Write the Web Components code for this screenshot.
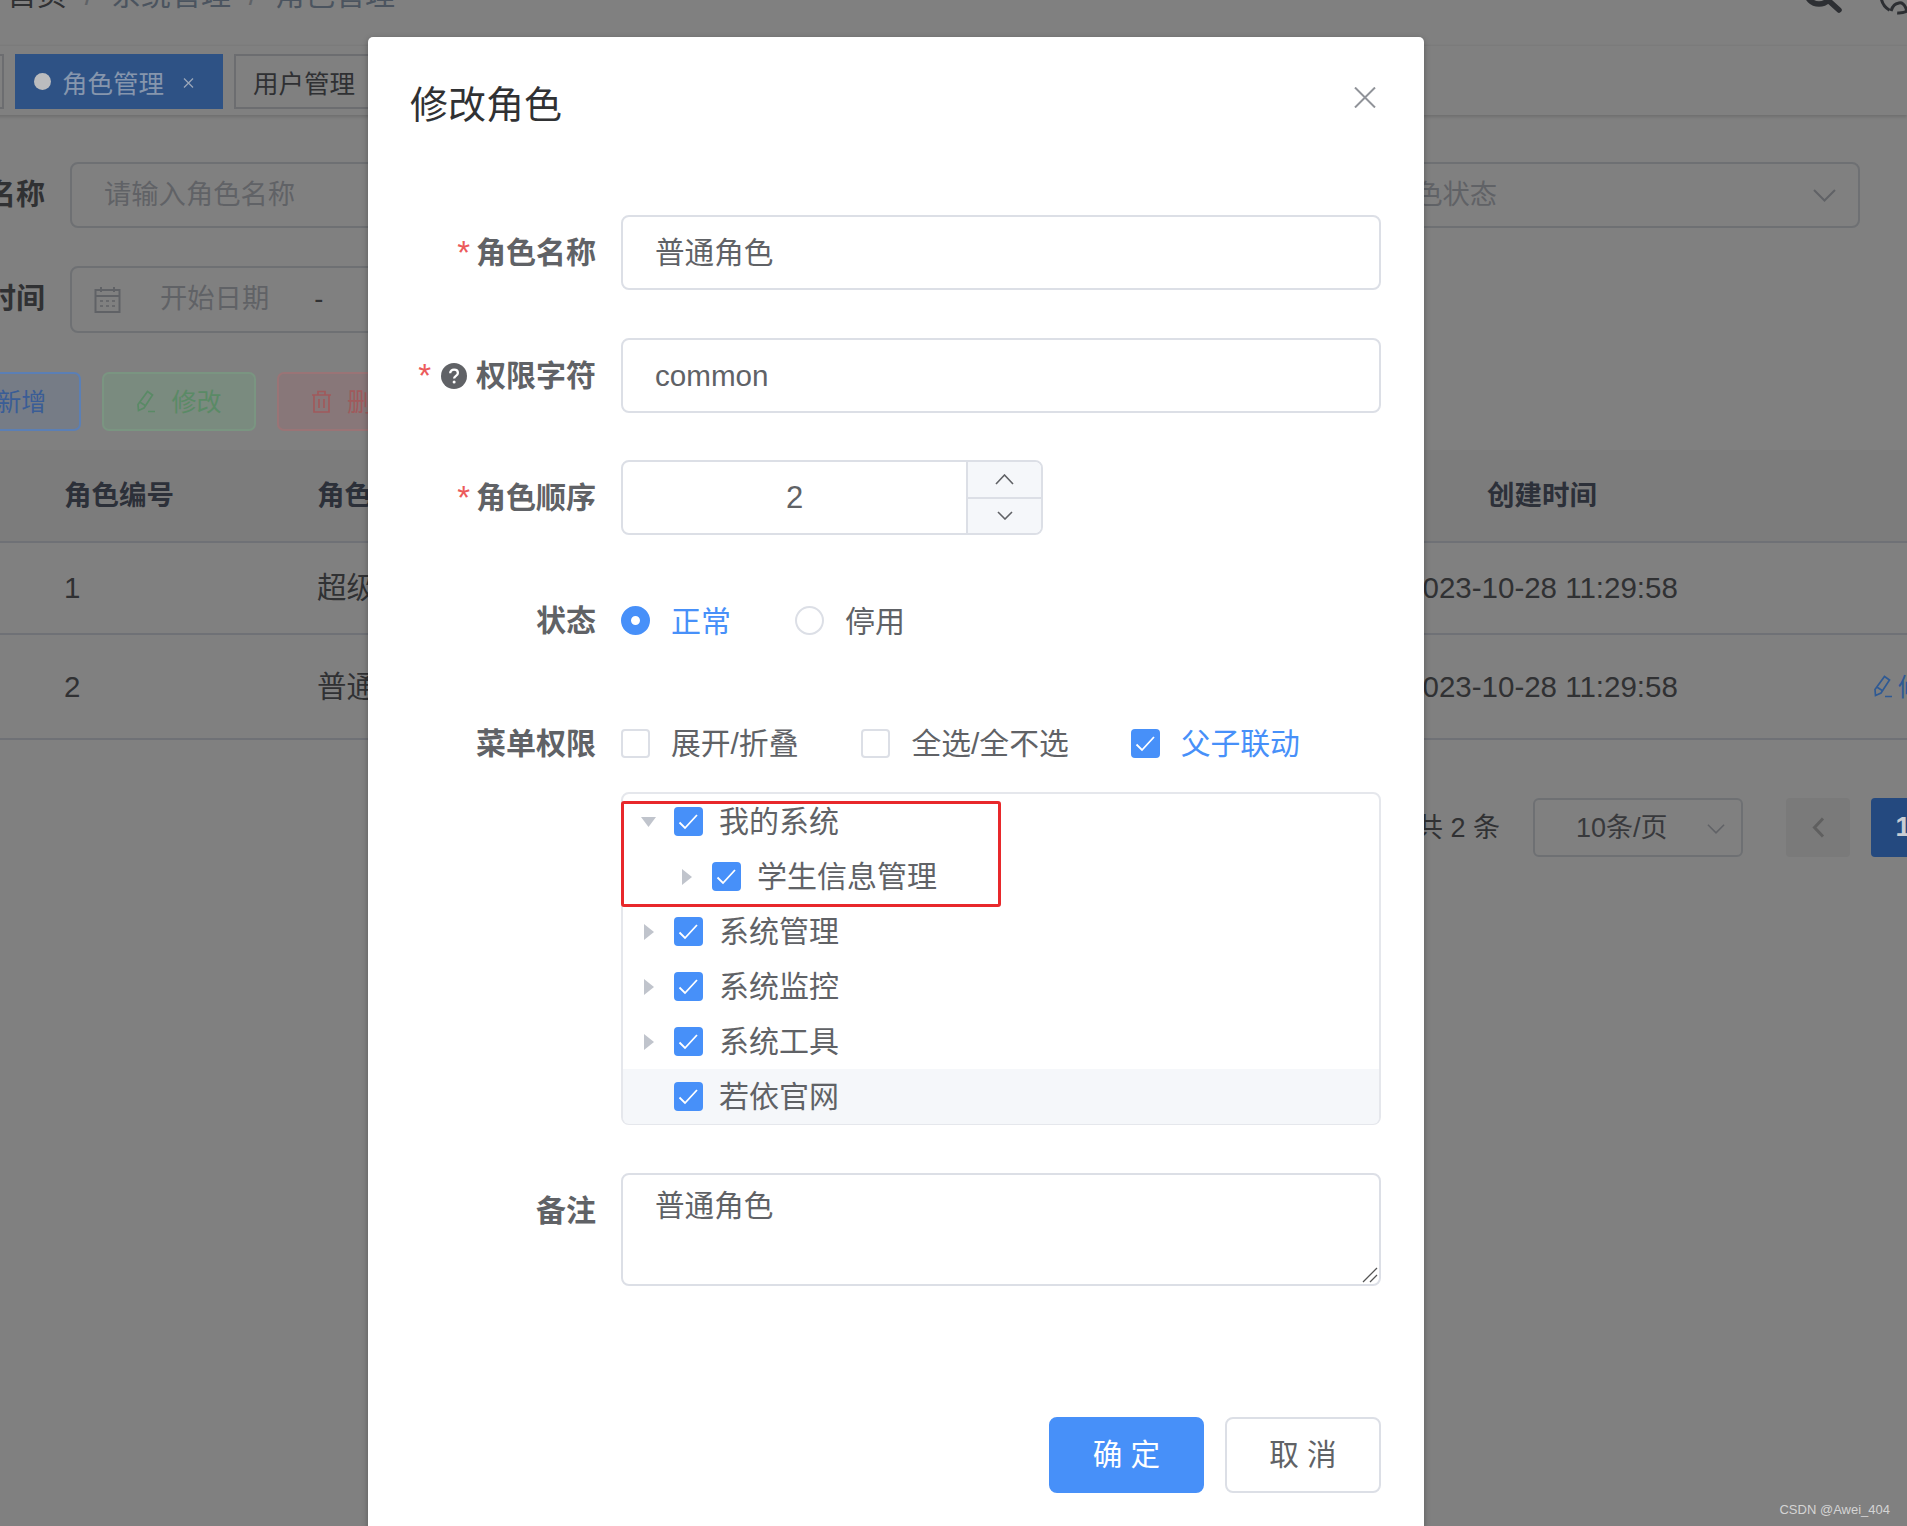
<!DOCTYPE html>
<html lang="zh">
<head>
<meta charset="utf-8">
<title>修改角色</title>
<style>
    html, body { margin: 0; height: 1526px; overflow: hidden; background: #808080; }
    body { font-family: "Liberation Sans", "Noto Sans CJK SC", sans-serif; line-height: 1.2; }
</style>
</head>
<body>
<admin-page>
    <app-navbar></app-navbar>
    <tags-view></tags-view>
    <search-form></search-form>
    <tool-bar></tool-bar>
    <role-table></role-table>
    <page-nav></page-nav>
</admin-page>
<role-dialog heading="修改角色">
    <form-row label="角色名称" required><text-field value="普通角色"></text-field></form-row>
    <form-row label="权限字符" required hint><text-field value="common"></text-field></form-row>
    <form-row label="角色顺序" required style="margin-top:-1px"><number-field value="2"></number-field></form-row>
    <form-row label="状态">
        <div style="display:flex;align-items:center;height:75px">
            <radio-item checked>正常</radio-item>
            <radio-item style="margin-left:64px">停用</radio-item>
        </div>
    </form-row>
    <form-row label="菜单权限">
        <div style="display:flex;align-items:center;height:75px">
            <check-item>展开/折叠</check-item>
            <check-item style="margin-left:63px">全选/全不选</check-item>
            <check-item style="margin-left:62px" checked>父子联动</check-item>
        </div>
        <menu-tree>
            <tree-node arrow="down">我的系统</tree-node>
            <tree-node arrow="right" level="2">学生信息管理</tree-node>
            <tree-node arrow="right">系统管理</tree-node>
            <tree-node arrow="right">系统监控</tree-node>
            <tree-node arrow="right">系统工具</tree-node>
            <tree-node hover>若依官网</tree-node>
        </menu-tree>
    </form-row>
    <form-row label="备注"><note-field value="普通角色"></note-field></form-row>
</role-dialog>
<water-mark>CSDN @Awei_404</water-mark>

<script>
const PENCIL = `<svg width="20" height="23" viewBox="0 0 20 23" fill="none" stroke="currentColor" stroke-width="1.700"><path d="M11.500 1.500l5 3.500-8.500 13-5.500 2.500-.5-6zM4.500 12.500l5.500 3.500M12 21.500h7"/></svg>`;
const CHEVRON_DOWN = `<svg width="23" height="13" viewBox="0 0 23 13" fill="none" stroke="currentColor" stroke-width="2"><path d="M1 1l10.500 10.500L22 1"/></svg>`;

class AdminPage extends HTMLElement {
    connectedCallback() {
        this.attachShadow({ mode: 'open' }).innerHTML = `
            <style>
                :host { display: block; margin-top: -58px; width: 1907px; color: #303133; }
            </style>
            <slot></slot>`;
    }
}

class AppNavbar extends HTMLElement {
    connectedCallback() {
        this.attachShadow({ mode: 'open' }).innerHTML = `
            <style>
                :host { display: flex; align-items: center; height: 104px; box-sizing: border-box; padding: 2px 0 0 7px; font-size: 30px; }
                .sep { width: 44px; text-align: center; color: #5f6266; }
                .link { color: #4b545f; }
                .icons { margin-left: auto; display: flex; align-items: center; gap: 36px; margin-right: -12px; }
            </style>
            <span>首页</span><span class="sep">/</span><span class="link">系统管理</span><span class="sep">/</span><span class="link">角色管理</span>
            <div class="icons">
                <svg width="40" height="40" viewBox="0 0 40 40" fill="none" stroke="#2d2f33" stroke-width="5.500" stroke-linecap="round"><circle cx="16" cy="16" r="13"/><path d="M26 26l10 9"/></svg>
                <svg width="40" height="40" viewBox="0 0 40 40" fill="none" stroke="#2d2f33" stroke-width="3"><circle cx="20" cy="20" r="18" stroke-dasharray="30 8"/><path d="M12 36c2-6 4-7 8-8s6 2 8 8"/></svg>
            </div>`;
    }
}

class TagsView extends HTMLElement {
    connectedCallback() {
        this.attachShadow({ mode: 'open' }).innerHTML = `
            <style>
                :host { display: flex; gap: 11px; height: 69px; box-sizing: border-box; padding-top: 8px; margin-left: -38px; background: #808080; box-shadow: 0 2px 3px rgba(0,0,0,.14), 0 -1px 2px rgba(0,0,0,.05); font-size: 25.500px; position: relative; }
                .tag { height: 55px; box-sizing: border-box; display: flex; align-items: center; border: 2px solid #6c6d70; padding: 0 17px; color: #2f3033; }
                .first { width: 42px; }
                .active { width: 208px; border: 0; background: #2e5285; color: #8696ad; padding: 0 0 0 19px; }
                .dot { width: 17px; height: 17px; border-radius: 50%; background: #bbbcbe; margin-right: 11px; }
                .t { padding-top: 5px; }
                .x { margin: 3px 0 0 19px; }
            </style>
            <div class="tag first"></div>
            <div class="tag active"><span class="dot"></span><span class="t">角色管理</span><svg class="x" width="11" height="10" viewBox="0 0 11 10" stroke="#9aa6b8" stroke-width="1.300"><path d="M1 .500l9 9M10 .500l-9 9"/></svg></div>
            <div class="tag"><span class="t">用户管理</span></div>`;
    }
}

class SearchForm extends HTMLElement {
    connectedCallback() {
        this.attachShadow({ mode: 'open' }).innerHTML = `
            <style>
                :host { display: flex; flex-direction: column; gap: 38px; margin: 47px 0 0 -71px; width: 1931px; }
                .row { display: flex; justify-content: space-between; }
                .item { display: flex; align-items: center; gap: 25px; height: 66px; }
                .row + .row .item { height: 67px; }
                label { font-size: 29px; font-weight: 700; color: #303133; }
                .box { width: 500px; height: 100%; box-sizing: border-box; border: 2px solid #6e7073; border-radius: 8px; display: flex; align-items: center; padding: 0 22px 0 32px; font-size: 27.300px; color: #606266; }
                .sel { padding-left: 26px; justify-content: space-between; }
                .date { padding-left: 22px; color: #606266; }
                .date span { margin-left: 39px; }
                .date b { font-weight: 400; color: #303133; margin-left: 45px; }
            </style>
            <div class="row">
                <div class="item"><label>角色名称</label><div class="box">请输入角色名称</div></div>
                <div class="item"><label>权限字符</label><div class="box">请输入权限字符</div></div>
                <div class="item"><label>状态</label><div class="box sel">角色状态${CHEVRON_DOWN}</div></div>
            </div>
            <div class="row">
                <div class="item"><label>创建时间</label><div class="box date" style="width:680px">
                    <svg width="27" height="27" viewBox="0 0 27 27" fill="none" stroke="#606266" stroke-width="2"><path d="M1.500 4h24v22h-24zM1.500 10h24M7 1v5M20 1v5"/><path d="M6 15h3M12 15h3M18 15h3M6 20h3M12 20h3M18 20h3" stroke-width="1.600"/></svg>
                    <span>开始日期</span><b>-</b>
                </div></div>
            </div>`;
    }
}

class ToolBar extends HTMLElement {
    connectedCallback() {
        this.attachShadow({ mode: 'open' }).innerHTML = `
            <style>
                :host { display: flex; gap: 21px; margin: 39px 0 0 -73px; font-size: 25px; }
                .btn { width: 154px; height: 59px; box-sizing: border-box; border: 2px solid; border-radius: 7px; display: flex; align-items: center; justify-content: center; gap: 15px; }
                .add { background: #767c86; border-color: #5b7fb5; color: #3a5d96; padding-left: 5px; }
                .edit { background: #7a8b7f; border-color: #7a9581; color: #5a8a66; }
                .del { background: #887779; border-color: #9a7476; color: #a05a5c; }
            </style>
            <div class="btn add"><span>+</span>新增</div>
            <div class="btn edit">${PENCIL}修改</div>
            <div class="btn del"><svg width="21" height="23" viewBox="0 0 21 23" fill="none" stroke="currentColor" stroke-width="1.700"><path d="M1 5h19M3 5v17h15V5M7 5V1.500h7V5M8 9v9M13 9v9"/></svg>删除</div>`;
    }
}

class RoleTable extends HTMLElement {
    connectedCallback() {
        this.attachShadow({ mode: 'open' }).innerHTML = `
            <style>
                :host { display: block; margin-top: 19px; font-size: 29.500px; }
                .row { display: grid; grid-template-columns: 253px 1016px 418px 122px 1fr; align-items: center; padding-left: 64px; border-bottom: 2px solid #6f7176; box-sizing: border-box; white-space: nowrap; }
                .head { height: 93px; background: #7c7c7c; font-weight: 700; font-size: 27.500px; color: #2c3039; }
                .r1 { height: 92px; }
                .r2 { height: 105px; }
                .mid { text-align: center; }
                .op { display: flex; align-items: center; gap: 5px; color: #2f5a94; font-size: 25px; }
            </style>
            <div class="row head"><span>角色编号</span><span>角色名称</span><span class="mid">创建时间</span></div>
            <div class="row r1"><span>1</span><span>超级管理员</span><span class="mid">2023-10-28 11:29:58</span></div>
            <div class="row r2"><span>2</span><span>普通角色</span><span class="mid">2023-10-28 11:29:58</span><span></span><span class="op">${PENCIL}修改</span></div>`;
    }
}

class PageNav extends HTMLElement {
    connectedCallback() {
        this.attachShadow({ mode: 'open' }).innerHTML = `
            <style>
                :host { display: flex; justify-content: flex-end; align-items: center; margin: 58px -28px 0 0; font-size: 27px; color: #303133; }
                .total { padding-top: 2px; }
                .sel { width: 210px; height: 59px; margin: 0 43px 0 33px; box-sizing: border-box; border: 2px solid #6e7073; border-radius: 6px; display: flex; align-items: center; justify-content: space-between; padding: 2px 16px 0 41px; font-size: 27px; color: #38393c; }
                .sel svg { color: #606266; }
                .pg { width: 64px; height: 59px; border-radius: 4px; display: flex; align-items: center; justify-content: center; }
                .prev { background: #7a7a7a; margin-right: 21px; }
                .cur { background: #24497f; color: #c9cdd3; font-weight: 700; }
            </style>
            <span class="total">共 2 条</span>
            <div class="sel">10条/页<svg width="18" height="10" viewBox="0 0 23 13" fill="none" stroke="currentColor" stroke-width="2"><path d="M1 1l10.500 10.500L22 1"/></svg></div>
            <div class="pg prev"><svg width="13" height="21" viewBox="0 0 13 21" fill="none" stroke="#5f5f5f" stroke-width="3"><path d="M11 1.500L2.500 10.500l8.500 9"/></svg></div>
            <div class="pg cur">1</div>`;
    }
}

class RoleDialog extends HTMLElement {
    connectedCallback() {
        this.attachShadow({ mode: 'open' }).innerHTML = `
            <style>
                :host { display: block; position: absolute; left: 368px; top: 37px; width: 1056px; background: #fff; border-radius: 5px; box-shadow: 0 2px 6px rgba(0,0,0,.3); color: #606266; font-size: 29.600px; }
                header { display: flex; justify-content: space-between; padding: 46px 48px 0 42px; height: 133px; box-sizing: border-box; }
                h1 { margin: 0; font-size: 38px; line-height: 44px; font-weight: 400; color: #303133; }
                header svg { margin-top: 4px; }
                .body { display: flex; flex-direction: column; gap: 48px; padding: 45px 43px 0 0; }
                footer { display: flex; justify-content: flex-end; gap: 21px; padding: 131px 43px 42px 0; }
                button { width: 155px; height: 76px; font: inherit; border: 2px solid #dcdfe6; border-radius: 8px; background: #fff; color: #606266; padding: 0; }
                button + button { width: 156px; }
                .ok { background: #4790f9; border-color: #4790f9; color: #fff; }
            </style>
            <header>
                <h1>${this.getAttribute('heading')}</h1>
                <svg width="22" height="21" viewBox="0 0 22 21" stroke="#909399" stroke-width="2"><path d="M1 .500l20 20M21 .500l-20 20"/></svg>
            </header>
            <div class="body"><slot></slot></div>
            <footer><button class="ok">确 定</button><button>取 消</button></footer>`;
    }
}

class FormRow extends HTMLElement {
    connectedCallback() {
        const star = this.hasAttribute('required') ? '<i class="star">*</i>' : '';
        const hint = this.hasAttribute('hint')
            ? '<svg class="hint" width="26" height="26" viewBox="0 0 26 26"><circle cx="13" cy="13" r="13" fill="#606266"/><path d="M9.200 10.200c0-2.200 1.700-3.600 3.900-3.600s3.800 1.300 3.800 3.300c0 2.900-3.800 2.900-3.800 5.600" fill="none" stroke="#fff" stroke-width="2.300"/><circle cx="13.100" cy="19" r="1.500" fill="#fff"/></svg>'
            : '';
        this.attachShadow({ mode: 'open' }).innerHTML = `
            <style>
                :host { display: grid; grid-template-columns: 228px 1fr; column-gap: 25px; }
                .label { height: 75px; display: flex; align-items: center; justify-content: flex-end; font-weight: 700; white-space: nowrap; font-size: 30px; }
                .star { font-style: normal; font-weight: 400; color: #ec5b5b; font-size: 33px; margin-right: 6px; }
                .hint { margin: 0 9px 0 4px; }
            </style>
            <div class="label">${star}${hint}<span>${this.getAttribute('label')}</span></div>
            <div><slot></slot></div>`;
    }
}

class TextField extends HTMLElement {
    connectedCallback() {
        this.attachShadow({ mode: 'open' }).innerHTML = `
            <style>
                :host { display: flex; align-items: center; height: 75px; box-sizing: border-box; border: 2px solid #dcdfe6; border-radius: 8px; padding-left: 32px; }
            </style>
            ${this.getAttribute('value')}`;
    }
}

class NumberField extends HTMLElement {
    connectedCallback() {
        this.attachShadow({ mode: 'open' }).innerHTML = `
            <style>
                :host { display: flex; width: 422px; height: 75px; box-sizing: border-box; border: 2px solid #dcdfe6; border-radius: 8px; overflow: hidden; }
                .val { flex: 1; display: flex; align-items: center; justify-content: center; font-size: 31px; }
                .steps { width: 73px; display: flex; flex-direction: column; border-left: 2px solid #dcdfe6; background: #f5f7fa; }
                .steps div { flex: 1; display: flex; align-items: center; justify-content: center; }
                .steps div + div { border-top: 2px solid #dcdfe6; }
            </style>
            <div class="val">${this.getAttribute('value')}</div>
            <div class="steps">
                <div><svg width="19" height="11" viewBox="0 0 19 11" fill="none" stroke="#606266" stroke-width="1.600"><path d="M1 10l8.500-9 8.500 9"/></svg></div>
                <div><svg width="16" height="9" viewBox="0 0 16 9" fill="none" stroke="#606266" stroke-width="1.600"><path d="M1 1l7 7 7-7"/></svg></div>
            </div>`;
    }
}

class RadioItem extends HTMLElement {
    connectedCallback() {
        this.attachShadow({ mode: 'open' }).innerHTML = `
            <style>
                :host { display: inline-flex; align-items: center; gap: 21px; font-size: 30px; }
                :host([checked]) { color: #4790f9; }
                .dot { width: 29px; height: 29px; box-sizing: border-box; border: 2px solid #dcdfe6; border-radius: 50%; background: #fff; }
                :host([checked]) .dot { border: 10.500px solid #4790f9; }
            </style>
            <span class="dot"></span><span style="padding-top:2px"><slot></slot></span>`;
    }
}

// the checkbox square is shared by the option row and the tree
const CHECK_CSS = `
    .box { flex: none; width: 29px; height: 29px; box-sizing: border-box; border: 2px solid #dcdfe6; border-radius: 4px; background: #fff; display: flex; }
    .box.on { background: #4790f9; border: 0; }`;
const CHECK_MARK = `<svg width="29" height="29" viewBox="0 0 29 29" fill="none" stroke="#fff" stroke-width="1.800"><path d="M5.500 15.500l5.500 5.500L23 8"/></svg>`;

class CheckItem extends HTMLElement {
    connectedCallback() {
        const on = this.hasAttribute('checked');
        this.attachShadow({ mode: 'open' }).innerHTML = `
            <style>
                :host { display: inline-flex; align-items: center; gap: 21px; font-size: 29.800px; }
                :host([checked]) { color: #4790f9; }
                ${CHECK_CSS}
            </style>
            <span class="box ${on ? 'on' : ''}">${on ? CHECK_MARK : ''}</span><slot></slot>`;
    }
}

class MenuTree extends HTMLElement {
    connectedCallback() {
        this.attachShadow({ mode: 'open' }).innerHTML = `
            <style>
                :host { display: block; position: relative; margin-top: 11px; height: 333px; box-sizing: border-box; border: 2px solid #e5e7ec; border-radius: 8px; }
                /* red rectangle the screenshot's author drew over the tree */
                .mark { position: absolute; left: -2px; top: 7px; width: 380px; height: 106px; box-sizing: border-box; border: 3px solid #e8282b; border-radius: 3px; }
            </style>
            <slot></slot><div class="mark"></div>`;
    }
}

class TreeNode extends HTMLElement {
    connectedCallback() {
        const arrow = this.getAttribute('arrow');
        const icon = arrow === 'down'
            ? '<svg width="15" height="10" viewBox="0 0 15 10"><path d="M0 0h15l-7.500 10z" fill="#c0c4cc"/></svg>'
            : arrow === 'right'
                ? '<svg width="10" height="16" viewBox="0 0 10 16"><path d="M0 0l10 8-10 8z" fill="#c0c4cc"/></svg>'
                : '';
        this.attachShadow({ mode: 'open' }).innerHTML = `
            <style>
                :host { display: flex; align-items: center; height: 55px; }
                :host([level="2"]) { padding-left: 38px; }
                :host([hover]) { background: #f5f7fa; border-radius: 0 0 6px 6px; }
                .arrow { width: 51px; display: flex; justify-content: center; }
                .label { margin-left: 16px; font-size: 30px; }
                ${CHECK_CSS}
            </style>
            <span class="arrow">${icon}</span><span class="box on">${CHECK_MARK}</span><span class="label"><slot></slot></span>`;
    }
}

class NoteField extends HTMLElement {
    connectedCallback() {
        this.attachShadow({ mode: 'open' }).innerHTML = `
            <style>
                :host { display: block; position: relative; height: 113px; box-sizing: border-box; border: 2px solid #dcdfe6; border-radius: 8px; padding: 13px 32px; }
                svg { position: absolute; right: 1px; bottom: 1px; }
            </style>
            ${this.getAttribute('value')}
            <svg width="16" height="16" viewBox="0 0 16 16" stroke="#555" stroke-width="1.300"><path d="M1 15L15 1M8 15l7-7"/></svg>`;
    }
}

class WaterMark extends HTMLElement {
    connectedCallback() {
        this.attachShadow({ mode: 'open' }).innerHTML = `
            <style>
                :host { position: absolute; right: 17px; bottom: 8px; font-size: 13px; color: #d4d4d4; }
            </style>
            <slot></slot>`;
    }
}

customElements.define('admin-page', AdminPage);
customElements.define('app-navbar', AppNavbar);
customElements.define('tags-view', TagsView);
customElements.define('search-form', SearchForm);
customElements.define('tool-bar', ToolBar);
customElements.define('role-table', RoleTable);
customElements.define('page-nav', PageNav);
customElements.define('role-dialog', RoleDialog);
customElements.define('form-row', FormRow);
customElements.define('text-field', TextField);
customElements.define('number-field', NumberField);
customElements.define('radio-item', RadioItem);
customElements.define('check-item', CheckItem);
customElements.define('menu-tree', MenuTree);
customElements.define('tree-node', TreeNode);
customElements.define('note-field', NoteField);
customElements.define('water-mark', WaterMark);
</script>
</body>
</html>
